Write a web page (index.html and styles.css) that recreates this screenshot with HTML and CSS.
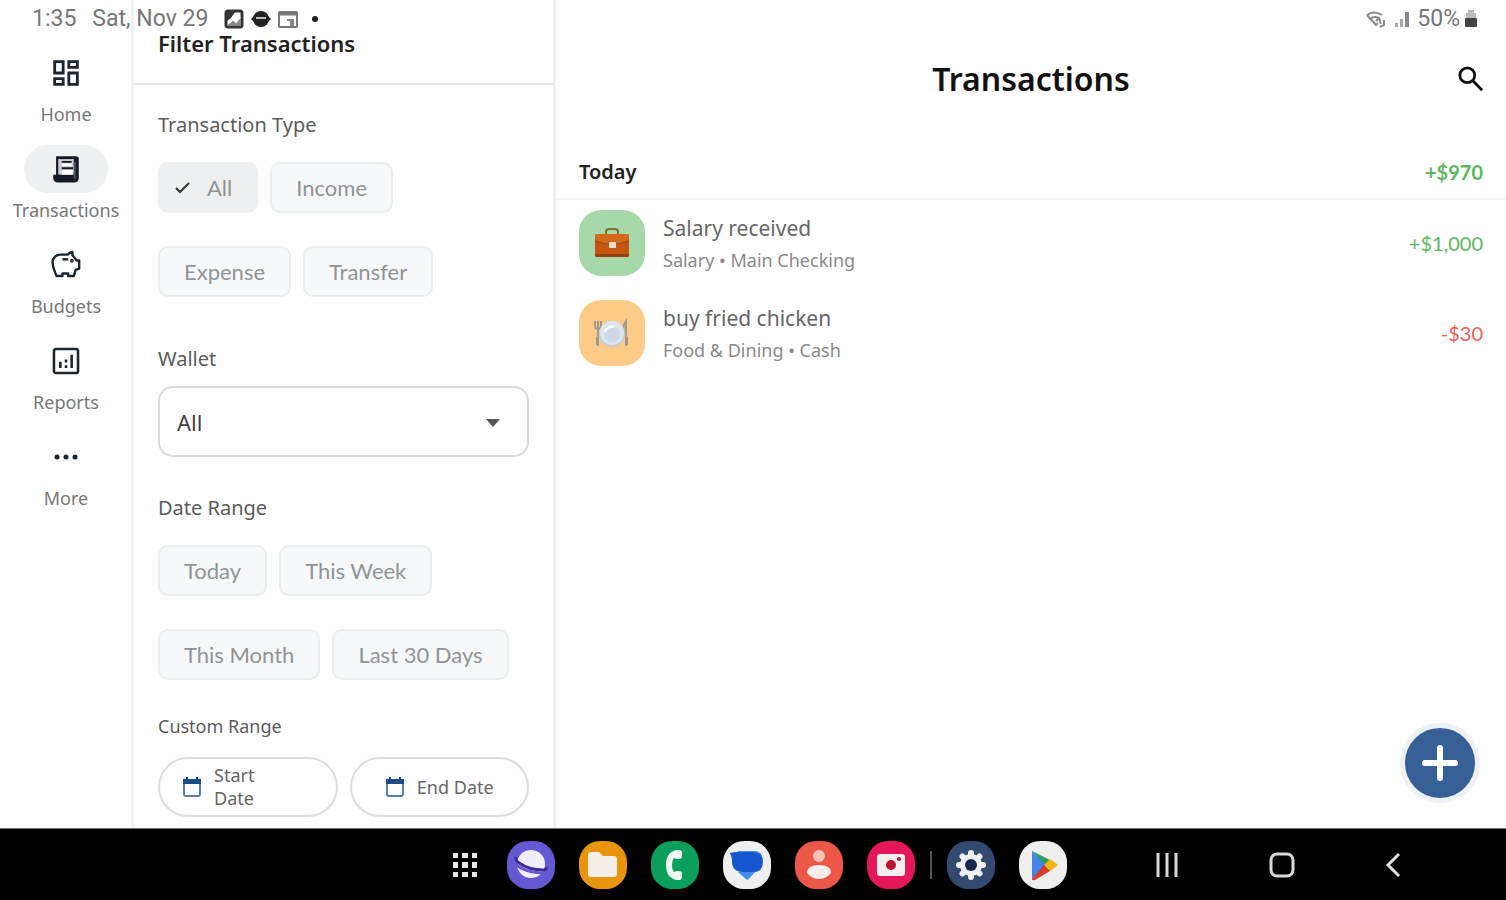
FILE: index.html
```html
<!DOCTYPE html>
<html lang="en">
<head>
  <meta charset="UTF-8">
  <meta name="viewport" content="width=device-width, initial-scale=1.0">
  <title>Transactions</title>
  <link rel="stylesheet" href="styles.css">
</head>
<body>
  <!-- Status bar -->
  <div class="status-bar">
    <div class="status-left">
      <span>1:35</span>
      <span>Sat, Nov 29</span>
      <div class="status-icons">
        <svg width="20" height="20" viewBox="0 0 20 20"><rect x="2" y="2" width="16" height="16" rx="2" fill="#fff" stroke="#333" stroke-width="3"/><path d="M3 17l6-7 3 3 5-5v9z" fill="#888"/><path d="M3 3h8l-4 6-4 3z" fill="#333"/><path d="M5 14l4-4 3 3 4-5" fill="none" stroke="#fff" stroke-width="2"/></svg>
        <svg width="20" height="20" viewBox="0 0 20 20"><circle cx="10" cy="10" r="8" fill="#222"/><path d="M0 10l4-4v8zM20 10l-4-4v8z" fill="#222"/><path d="M5 9h10" stroke="#bbb" stroke-width="2"/></svg>
        <svg width="20" height="20" viewBox="0 0 20 20"><rect x="1" y="3" width="18" height="15" rx="1" fill="none" stroke="#777" stroke-width="2"/><path d="M1 5h18" stroke="#777" stroke-width="3"/><path d="M9 11h4v6M15 10v7" fill="none" stroke="#888" stroke-width="2"/></svg>
        <span class="status-dot"></span>
      </div>
    </div>
    <div class="status-right">
      <svg width="22" height="18" viewBox="0 0 22 18" fill="none" stroke="#888" stroke-width="2"><path d="M2 5q7-5 15 0M5 9q5-4 10 0M2 5l9 10 2-2"/><path d="M11 11l3-3 2 6M19 10v5l-4 2"/></svg>
      <svg width="18" height="18" viewBox="0 0 18 18"><path d="M2 17v-4h3v4zM7 17V9h3v8z" fill="#aaa"/><path d="M12 17V2h4v15z" fill="#888"/></svg>
      <span>50%</span>
      <svg width="14" height="18" viewBox="0 0 14 18"><path d="M4 0h6v3h2v6H2V3h2z" fill="#bbb"/><rect x="1" y="8" width="12" height="9" rx="1" fill="#444"/></svg>
    </div>
  </div>

  <div class="app">
    <!-- Navigation rail -->
    <nav class="rail">
      <a class="rail-item" href="#home">
        <span class="rail-icon"><svg width="34" height="34" viewBox="0 0 24 24" fill="#1d2530"><path d="M19 5v2h-4V5h4M9 5v6H5V5h4m10 8v6h-4v-6h4M9 17v2H5v-2h4M21 3h-8v6h8V3zM11 3H3v10h8V3zm10 8h-8v10h8V11zm-10 4H3v6h8v-6z"/></svg></span>
        <span class="rail-label">Home</span>
      </a>
      <a class="rail-item active" href="#transactions">
        <span class="rail-icon"><svg width="34" height="34" viewBox="0 0 24 24"><path d="M5 3h14q2 0 2 2v13.500a3 3 0 0 1-3 3H6a3 3 0 0 1-3-3V16h2z" fill="#141b26"/><path d="M6.500 5h11v11h-11z" fill="#c8ccd1"/><path d="M9 12.500h8V16H9z" fill="#fff"/><path d="M17.500 16v3h1.500V7h-1.500z" fill="#454c57"/><path d="M9 7h7M9 11.500h8" stroke="#141b26" stroke-width="1.300"/><path d="M9 9h7" stroke="#fff" stroke-width="2"/></svg></span>
        <span class="rail-label">Transactions</span>
      </a>
      <a class="rail-item" href="#budgets">
        <span class="rail-icon"><svg width="34" height="34" viewBox="0 0 24 24" fill="none" stroke="#1d2530" stroke-width="1.700" stroke-linejoin="round"><path d="M16.500 5V2.800c-1.500.2-2.600.9-3.300 1.900H8C5 4.700 2.500 7 2.500 10c0 3.200 1.700 6.700 2.800 9.800h4.200v-1.800h4v1.800h4l1.300-4.300 2.500-1V8.800h-1.800z"/><path d="M9.500 8h4"/><circle cx="16.200" cy="9" r=".5"/></svg></span>
        <span class="rail-label">Budgets</span>
      </a>
      <a class="rail-item" href="#reports">
        <span class="rail-icon"><svg width="34" height="34" viewBox="0 0 24 24" fill="none" stroke="#1d2530" stroke-width="1.800"><rect x="3.500" y="3.500" width="17" height="17" rx="1.500"/><path d="M8 12.500V17M12 11v2M12 15v2M16 7.500V17"/></svg></span>
        <span class="rail-label">Reports</span>
      </a>
      <a class="rail-item" href="#more">
        <span class="rail-icon"><svg width="32" height="32" viewBox="0 0 32 32" fill="#1d2530"><circle cx="7" cy="16" r="2.500"/><circle cx="16" cy="16" r="2.500"/><circle cx="25" cy="16" r="2.500"/></svg></span>
        <span class="rail-label">More</span>
      </a>
    </nav>

    <!-- Filter panel -->
    <aside class="filters">
      <h2 class="filters-title">Filter Transactions</h2>
      <div class="filters-body">
        <h3 class="filter-label">Transaction Type</h3>
        <div class="chips">
          <button class="chip selected" type="button"><svg width="18" height="18" viewBox="0 0 18 18" fill="none" stroke="#333" stroke-width="2"><path d="M2 9l4 4 9-9"/></svg>All</button>
          <button class="chip" type="button">Income</button>
        </div>
        <div class="chips">
          <button class="chip" type="button">Expense</button>
          <button class="chip" type="button">Transfer</button>
        </div>

        <label class="filter-label wallet-label" for="wallet">Wallet</label>
        <div class="select-box">
          <select id="wallet">
            <option>All</option>
          </select>
          <svg class="select-arrow" width="14" height="8" viewBox="0 0 14 8"><path d="M0 0h14L7 8z" fill="#555"/></svg>
        </div>

        <h3 class="filter-label date-label">Date Range</h3>
        <div class="chips">
          <button class="chip" type="button">Today</button>
          <button class="chip" type="button">This Week</button>
        </div>
        <div class="chips">
          <button class="chip" type="button">This Month</button>
          <button class="chip" type="button">Last 30 Days</button>
        </div>

        <h3 class="filter-label custom-label">Custom Range</h3>
        <div class="date-buttons">
          <button class="date-button start" type="button"><svg width="20" height="22" viewBox="0 0 20 22"><rect x="2" y="4" width="16" height="16" rx="2" fill="none" stroke="#5b7ea8" stroke-width="2"/><path d="M1 3h3V1h2v2h8V1h2v2h3v5H1z" fill="#1c4d84"/></svg><span>Start<br>Date</span></button>
          <button class="date-button" type="button"><svg width="20" height="22" viewBox="0 0 20 22"><rect x="2" y="4" width="16" height="16" rx="2" fill="none" stroke="#5b7ea8" stroke-width="2"/><path d="M1 3h3V1h2v2h8V1h2v2h3v5H1z" fill="#1c4d84"/></svg><span>End Date</span></button>
        </div>
      </div>
    </aside>

    <!-- Transaction list -->
    <main class="content">
      <header class="content-header">
        <h1>Transactions</h1>
        <button class="search" type="button" aria-label="Search"><svg width="26" height="26" viewBox="0 0 28 28" fill="none" stroke="#111" stroke-width="3"><circle cx="10" cy="10" r="8"/><path d="M16 16l10 10"/></svg></button>
      </header>
      <div class="day">
        <h2>Today</h2>
        <span class="amount income total">+$970</span>
      </div>
      <ul class="transactions">
        <li class="transaction">
          <div class="category salary">
            <svg width="36" height="32" viewBox="0 0 36 32"><path d="M12 7V5q0-3 3-3h6q3 0 3 3v2" fill="none" stroke="#8a6a3c" stroke-width="2"/><rect x="1" y="7" width="34" height="23" rx="2" fill="#c4560f"/><path d="M1 14q17 8 34 0V9q0-2-2-2H3Q1 7 1 9z" fill="#d4691c"/><path d="M1 14q17 7 34 0" fill="none" stroke="#8e3b0a" stroke-width="1"/><path d="M1 27h34v1q0 2-2 2H3q-2 0-2-2z" fill="#94400d"/><rect x="15" y="15" width="7" height="6" rx="1" fill="#e8dfcf"/></svg>
          </div>
          <div class="details">
            <h3>Salary received</h3>
            <p>Salary • Main Checking</p>
          </div>
          <span class="amount income">+$1,000</span>
        </li>
        <li class="transaction">
          <div class="category food">
            <svg width="38" height="32" viewBox="0 0 38 32"><g fill="none" stroke="#a39a8e" stroke-width="2"><path d="M2 4v5q0 3 3 3t3-3V4M5 4v25M4 20v8"/><path d="M33 29V4q-4 5-2 13h2M34 20v8"/></g><circle cx="19" cy="17" r="13" fill="#c3cdd8"/><circle cx="19" cy="16" r="12" fill="#dde5ed"/><circle cx="19" cy="17" r="8" fill="#cdd9e6"/><path d="M12 15a7 7 0 0 1 9-5" fill="none" stroke="#fff" stroke-width="2"/></svg>
          </div>
          <div class="details">
            <h3>buy fried chicken</h3>
            <p>Food &amp; Dining • Cash</p>
          </div>
          <span class="amount expense">-$30</span>
        </li>
      </ul>
      <button class="fab" type="button" aria-label="Add transaction"><svg width="36" height="36" viewBox="0 0 36 36" stroke="#fff" stroke-width="6" stroke-linecap="round"><path d="M18 3v30M3 18h30"/></svg></button>
    </main>
  </div>

  <!-- Taskbar -->
  <footer class="taskbar">
    <div class="apps">
      <svg width="24" height="24" viewBox="0 0 24 24" fill="#e8e8e8"><path d="M0 0h5v5H0zM9 0h6v5H9zM19 0h5v5h-5zM0 9h5v6H0zM9 9h6v6H9zM19 9h5v6h-5zM0 19h5v5H0zM9 19h6v5H9zM19 19h5v5h-5z"/></svg>
      <div class="dock">
        <svg width="48" height="48" viewBox="0 0 48 48"><rect width="48" height="48" rx="21" fill="#6558d3"/><circle cx="24" cy="23" r="14" fill="#f0eff8"/><path d="M9 16q-1 3 3 6 10 7 24 7 4 0 3-3" fill="none" stroke="#3c279c" stroke-width="3"/><path d="M7 22q10 10 31 10" fill="none" stroke="#6558d3" stroke-width="3"/></svg>
        <svg width="48" height="48" viewBox="0 0 48 48"><rect width="48" height="48" rx="21" fill="#e8950c"/><path d="M9 14q0-3 3-3h8l4 4h11q3 0 3 3v15q0 3-3 3H12q-3 0-3-3z" fill="#f3eee6"/></svg>
        <svg width="48" height="48" viewBox="0 0 48 48"><rect width="48" height="48" rx="21" fill="#0a9f5b"/><path d="M27 12q-9 1-9 12t9 12" fill="none" stroke="#eef7f1" stroke-width="6" stroke-linecap="round"/><rect x="23" y="9" width="8" height="9" rx="3" fill="#eef7f1"/><rect x="23" y="30" width="8" height="9" rx="3" fill="#eef7f1"/></svg>
        <svg width="48" height="48" viewBox="0 0 48 48"><rect width="48" height="48" rx="21" fill="#efefef"/><path d="M15 10h18q7 1 6 9 0 8-8 13l-6 7-5-8q-9 0-9-11z" fill="#478bed"/><path d="M7 12q3-1 9-1h14q10 0 10 10t-10 10H20Q9 31 9 20q0-4-2-8z" fill="#1657d0"/><path d="M15 31h11l-2 8z" fill="#478bed"/></svg>
        <svg width="48" height="48" viewBox="0 0 48 48"><rect width="48" height="48" rx="21" fill="#ec5747"/><circle cx="24" cy="15" r="6" fill="#f7c3b7"/><path d="M12 32q0-8 12-8t12 8q-5 6-12 6t-12-6z" fill="#f7eeea"/></svg>
        <svg width="48" height="48" viewBox="0 0 48 48"><rect width="48" height="48" rx="21" fill="#e41858"/><rect x="10" y="13" width="28" height="22" rx="3" fill="#f7eef0"/><circle cx="24" cy="24" r="5" fill="#c1122f"/><circle cx="32" cy="18" r="2" fill="#c1122f"/></svg>
      </div>
      <span class="separator"></span>
      <div class="dock">
        <svg width="48" height="48" viewBox="0 0 48 48"><rect width="48" height="48" rx="21" fill="#33496f"/><g stroke="#f0f1f4" stroke-width="6" stroke-linecap="round"><path d="M24 12v24M12 24h24M15.500 15.500l17 17M32.500 15.500l-17 17"/></g><circle cx="24" cy="24" r="11" fill="#f0f1f4"/><circle cx="24" cy="24" r="6" fill="#17294f"/></svg>
        <svg width="48" height="48" viewBox="0 0 48 48"><rect width="48" height="48" rx="21" fill="#efefef"/><path d="M13 10v28l14-14z" fill="#4384ec"/><path d="M13 10l20 10-6 5z" fill="#26a05a"/><path d="M31 18l7 5q1 1 0 2l-7 5-6-6z" fill="#f3b512"/><path d="M13 38l12-14 6 6-15 9q-3 1-3-1z" fill="#d93a2b"/></svg>
      </div>
    </div>
    <div class="system-keys">
      <button type="button" aria-label="Recents"><svg width="24" height="26" viewBox="0 0 24 26" stroke="#d8d8d8" stroke-width="3"><path d="M3 1v24M12 1v24M21 1v24"/></svg></button>
      <button type="button" aria-label="Home"><svg width="26" height="26" viewBox="0 0 26 26"><rect x="2" y="2" width="22" height="22" rx="6" fill="none" stroke="#d8d8d8" stroke-width="3"/></svg></button>
      <button type="button" aria-label="Back"><svg width="16" height="26" viewBox="0 0 16 26"><path d="M14 2L3 13l11 11" fill="none" stroke="#e0e0e0" stroke-width="3"/></svg></button>
    </div>
  </footer>
</body>
</html>
```
FILE: styles.css
```css
/* General Styles */
* {
  box-sizing: border-box;
}

body {
  font-family: "Noto Sans", sans-serif;
  margin: 0;
  background: #fefefe;
  color: #555;
  display: flex;
  flex-direction: column;
  min-height: 100vh;
}

h1, h2, h3, p, ul {
  margin: 0;
  padding: 0;
}

button {
  font-family: inherit;
  border: none;
  background: none;
  padding: 0;
  cursor: pointer;
}

svg {
  display: block;
  flex-shrink: 0;
}

/* Status Bar, drawn over the app */
.status-bar {
  position: absolute;
  top: 0;
  left: 0;
  right: 0;
  display: flex;
  justify-content: space-between;
  padding: 5px 28px 0 32px;
  font-family: Roboto, sans-serif;
  font-size: 23px;
  line-height: 28px;
  color: #777;
}

.status-left,
.status-right,
.status-icons {
  display: flex;
  align-items: center;
}

.status-left {
  gap: 16px;
}

.status-icons {
  gap: 7px;
}

.status-right {
  gap: 6px;
}

.status-right span {
  margin-right: -2px;
}

.status-dot {
  width: 6px;
  height: 6px;
  margin-left: 7px;
  border-radius: 50%;
  background: #222;
}

/* Layout */
.app {
  flex: 1;
  display: flex;
}

/* Navigation Rail */
.rail {
  width: 134px;
  padding: 49px 0 0 1px;
  border-right: 3px solid #f1f1f1;
  display: flex;
  flex-direction: column;
  align-items: center;
  gap: 19px;
}

.rail-item {
  display: flex;
  flex-direction: column;
  align-items: center;
  gap: 5px;
  color: #777;
  text-decoration: none;
}

.rail-icon {
  display: flex;
  align-items: center;
  justify-content: center;
  width: 84px;
  height: 48px;
  border-radius: 24px;
}

.rail-item.active .rail-icon {
  background: #eef0f2;
}

.rail-label {
  font-size: 18px;
  line-height: 24px;
}

/* Filters */
.filters {
  width: 422px;
  border-right: 3px solid #efefef;
}

.filters-title {
  padding: 29px 24px 26px;
  border-bottom: 2px solid #e8e8e8;
  font-size: 22px;
  line-height: 28px;
  font-weight: 600;
  color: #222;
}

.filters-body {
  padding: 28px 24px 11px;
}

.filter-label {
  display: block;
  font-size: 20px;
  line-height: 24px;
  font-weight: 400;
  color: #5c5c5c;
}

.chips {
  display: flex;
  gap: 12px;
  margin-top: 33px;
}

.filter-label + .chips {
  margin-top: 25px;
}

.chip {
  height: 51px;
  padding: 0 24px;
  border: 2px solid #ebeef0;
  border-radius: 10px;
  background: #f6f8f9;
  font-family: Lato, sans-serif;
  font-size: 22px;
  color: #909497;
}

.chip.selected {
  display: flex;
  align-items: center;
  gap: 15px;
  padding: 0 24px 0 14px;
  background: #eeeff0;
  border-color: #eeeff0;
}

.wallet-label {
  margin-top: 50px;
}

.select-box {
  position: relative;
  margin-top: 15px;
}

.select-box select {
  appearance: none;
  display: block;
  width: 100%;
  height: 71px;
  padding: 0 17px;
  border: 2px solid #dadada;
  border-radius: 15px;
  background: #fefefe;
  font-family: inherit;
  font-size: 22px;
  color: #444;
}

.select-arrow {
  position: absolute;
  top: 33px;
  right: 29px;
  pointer-events: none;
}

.date-label {
  margin-top: 39px;
}

.custom-label {
  margin-top: 34px;
  font-size: 18px;
}

.date-buttons {
  display: grid;
  grid-template-columns: 1fr 1fr;
  gap: 12px;
  margin-top: 19px;
}

.date-button {
  display: flex;
  align-items: center;
  justify-content: center;
  gap: 12px;
  height: 60px;
  border: 2px solid #dedede;
  border-radius: 30px;
  font-size: 18px;
  line-height: 23px;
  color: #666;
  text-align: left;
}

.date-button.start {
  justify-content: flex-start;
  padding-left: 22px;
}

/* Transactions */
.content {
  flex: 1;
  position: relative;
}

.content-header {
  display: grid;
  grid-template-columns: 1fr auto 1fr;
  align-items: center;
  padding: 56px 22px 42px;
}

.content-header h1 {
  grid-column: 2;
  font-size: 32px;
  line-height: 46px;
  font-weight: 600;
  color: #111;
}

.search {
  justify-self: end;
}

.day {
  display: flex;
  align-items: center;
  justify-content: space-between;
  padding: 14px 23px 12px;
  border-bottom: 2px solid #f3f3f3;
}

.day h2 {
  font-size: 20px;
  line-height: 28px;
  font-weight: 600;
  color: #222;
}

.transactions {
  list-style: none;
  padding-top: 10px;
}

.transaction {
  display: flex;
  align-items: center;
  gap: 18px;
  padding: 0 23px;
  margin-bottom: 24px;
}

.category {
  display: flex;
  align-items: center;
  justify-content: center;
  width: 66px;
  height: 66px;
  border-radius: 22px;
}

.category.salary {
  background: #a6d8a9;
}

.category.food {
  background: #fdcb87;
}

.details {
  flex: 1;
}

.details h3 {
  font-size: 21px;
  line-height: 34px;
  font-weight: 400;
  color: #666;
}

.details p {
  font-size: 18px;
  line-height: 30px;
  color: #8a8a8a;
}

.amount {
  font-family: Lato, sans-serif;
  font-size: 20px;
}

.amount.total {
  font-weight: 700;
}

.income {
  color: #5cb85f;
}

.expense {
  color: #e8635a;
}

.fab {
  position: absolute;
  right: 26px;
  bottom: 25px;
  display: flex;
  align-items: center;
  justify-content: center;
  width: 80px;
  height: 80px;
  border: 5px solid #eef1f6;
  border-radius: 50%;
  background: #365f96;
}

/* Taskbar */
.taskbar {
  display: grid;
  grid-template-columns: 1fr auto 1fr;
  align-items: center;
  height: 72px;
  padding-left: 14px;
  border-top: 1px solid #777;
  background: #000;
}

.apps {
  grid-column: 2;
  display: flex;
  align-items: center;
}

.dock {
  display: flex;
  gap: 24px;
}

.apps > svg {
  margin-right: 30px;
}

.separator {
  width: 2px;
  height: 28px;
  margin: 0 15px;
  background: #555;
}

.system-keys {
  display: flex;
  align-items: center;
  justify-content: flex-end;
  gap: 90px;
  padding-right: 105px;
}
```
